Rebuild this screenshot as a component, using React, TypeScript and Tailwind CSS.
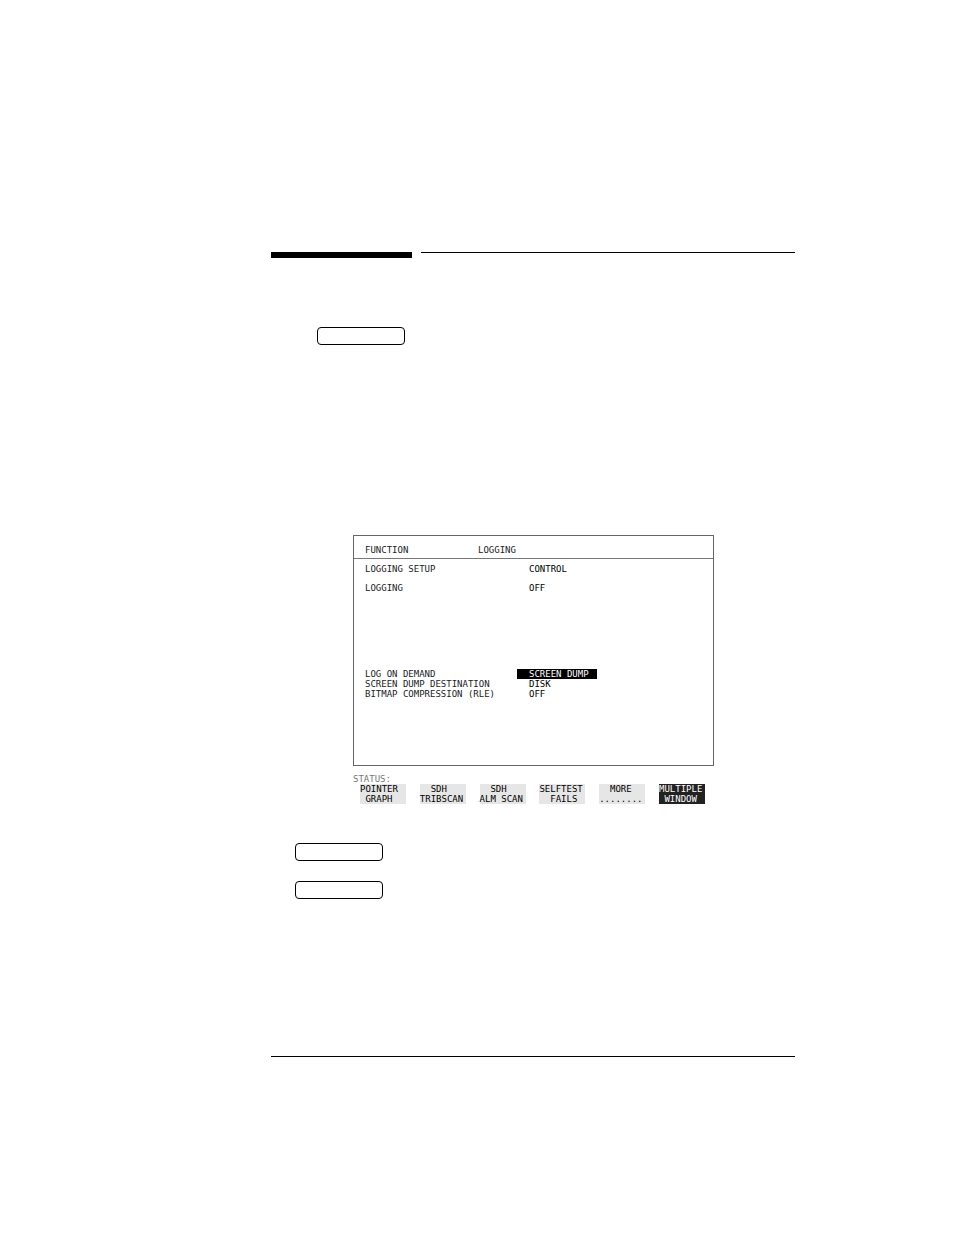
import clsx from "clsx";

type Setting = { label: string; value: string; active?: boolean };
type Softkey = { lines: [string, string]; active?: boolean };

const loggingSettings: Setting[] = [
  { label: "LOGGING SETUP", value: "CONTROL" },
  { label: "LOGGING", value: "OFF" },
];

const dumpSettings: Setting[] = [
  { label: "LOG ON DEMAND", value: "SCREEN DUMP", active: true },
  { label: "SCREEN DUMP DESTINATION", value: "DISK" },
  { label: "BITMAP COMPRESSION (RLE)", value: "OFF" },
];

const softkeys: Softkey[] = [
  { lines: ["POINTER", " GRAPH"] },
  { lines: ["  SDH", "TRIBSCAN"] },
  { lines: ["  SDH", "ALM SCAN"] },
  { lines: ["SELFTEST", "  FAILS"] },
  { lines: ["  MORE", "........"] },
  { lines: ["MULTIPLE", " WINDOW"], active: true },
];

function KeyCap({ label, className }: { label: string; className?: string }) {
  return (
    <button
      type="button"
      aria-label={label}
      className={clsx(
        "block h-[18px] w-[88px] rounded-[4px] border border-black bg-white",
        className
      )}
    />
  );
}

function SettingList({
  items,
  className,
}: {
  items: Setting[];
  className?: string;
}) {
  return (
    <dl className={clsx("flex flex-col", className)}>
      {items.map((item) => (
        <div key={item.label} className="flex">
          <dt className="w-[152px] shrink-0">{item.label}</dt>
          <dd
            className={clsx(
              "w-20 pl-3",
              item.active ? "bg-black text-white" : "text-black"
            )}
          >
            {item.value}
          </dd>
        </div>
      ))}
    </dl>
  );
}

function LoggingDisplay() {
  return (
    <section className="mt-[190px] mr-[81px] ml-[82px] font-['DejaVu_Sans_Mono',monospace] text-[9px] leading-[10px] whitespace-pre text-[#222]">
      <div className="border border-[#666] pb-[66px]">
        <div className="flex border-b border-[#777] pt-[9px] pb-[3px] pl-[11px]">
          <h1 className="w-[113px]">FUNCTION</h1>
          <p>LOGGING</p>
        </div>
        <SettingList items={loggingSettings} className="gap-[9px] pt-[5px] pl-[11px]" />
        <SettingList items={dumpSettings} className="pt-[76px] pl-[11px]" />
      </div>
      <p className="mt-2 text-[#777]">STATUS:</p>
      <div className="flex justify-between pr-[9px] pl-[7px]">
        {softkeys.map((key) => (
          <button
            key={key.lines.join()}
            type="button"
            className={clsx(
              "w-[46px] text-left",
              key.active ? "bg-[#222] text-white" : "bg-[#e6e6e6] text-black"
            )}
          >
            <span className="block">{key.lines[0]}</span>
            <span className="block">{key.lines[1]}</span>
          </button>
        ))}
      </div>
    </section>
  );
}

export default function App() {
  return (
    <main className="min-h-screen bg-white pt-[252px] pr-[159px] pb-[178px] pl-[271px]">
      <div className="flex gap-[9px]">
        <div className="h-[6px] w-[141px] bg-black" />
        <div className="h-px flex-1 bg-black" />
      </div>
      <KeyCap label="Function key" className="mt-[69px] ml-[46px]" />
      <LoggingDisplay />
      <div className="mt-[39px] ml-6 flex flex-col gap-5">
        <KeyCap label="Print key" />
        <KeyCap label="Log key" />
      </div>
      <hr className="mt-[157px] border-t border-black" />
    </main>
  );
}
